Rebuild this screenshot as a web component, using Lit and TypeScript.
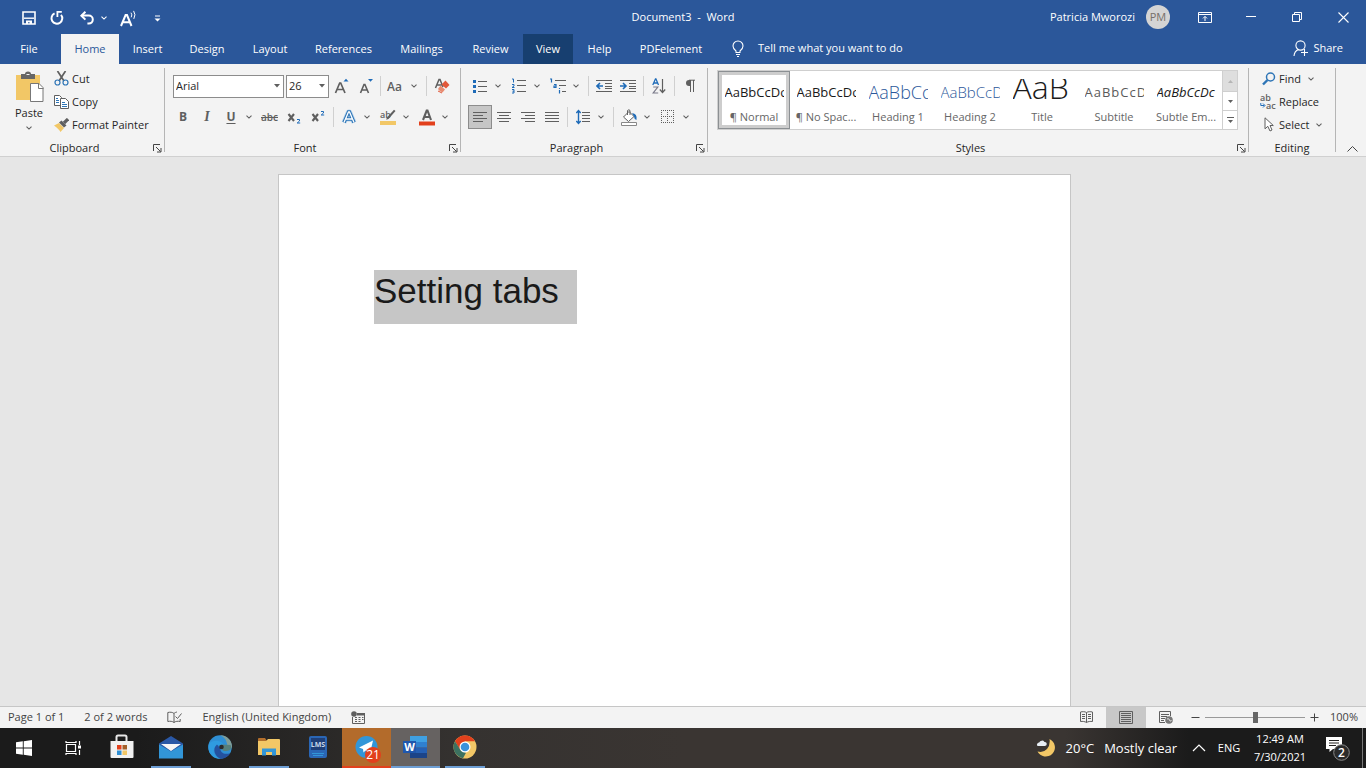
import { LitElement, html, svg, css, nothing } from "lit";
import { customElement, state } from "lit/decorators.js";
import { classMap } from "lit/directives/class-map.js";

const G = "#5f5f5f";
const B = "#1e6bb8";

const icon = (w: number, h: number, body: unknown) =>
  html`<svg class="icon" width=${w} height=${h} viewBox="0 0 ${w} ${h}" fill="none" aria-hidden="true">${body}</svg>`;

const chevron = (color = G) =>
  icon(6, 4, svg`<path d="M.5 .7 3 3.1 5.5 .7" stroke=${color} stroke-width="1.1"/>`);

const lines = (rows: number[][], color = G) =>
  svg`<path d=${rows.map(([x, y, w]) => `M${x} ${y}h${w}`).join("")} stroke=${color}/>`;

const launcherIcon = icon(9, 9, svg`<path d="M.5 7V.5H7M3 3l4.5 4.5M8 4v4H4" stroke="#444"/>`);

const saveIcon = icon(14, 14, svg`<path d="M1 1h12v12H1z" stroke="#fff" stroke-width="1.6"/><path d="M2 7.2h10" stroke="#fff" stroke-width="1.4"/><path d="M4 13V9.5h6V13H7.6v-1.8H6V13z" fill="#fff"/>`);
const repeatIcon = icon(16, 16, svg`<path d="M5.6 3.4A5.4 5.4 0 1 0 12 4.8" stroke="#fff" stroke-width="2"/><path d="M7.5 1.900h5.3M8.4 1.500v5.400" stroke="#fff" stroke-width="1.800"/>`);
const undoIcon = icon(16, 14, svg`<path d="M2.5 4.6h7.3a4 4 0 0 1 0 8H8.4" stroke="#fff" stroke-width="2"/><path d="M6.4 .8 2.4 4.7l4 3.9" stroke="#fff" stroke-width="2"/>`);
const readAloudIcon = icon(18, 18, svg`<path d="M1 17 5.600 6h1.400L11.500 17M3 13.300h6.500" stroke="#fff" stroke-width="2"/><path d="M11 3.700q1.600 2 .2 4.600M13.600 1.900q2.600 3.600.2 8" stroke="#fff"/>`);
const customiseIcon = icon(7, 7, svg`<path d="M1 1h5" stroke="#fff"/><path d="M.5 3.400h6L3.500 6.400z" fill="#fff"/>`);

const ribbonOptionsIcon = icon(14, 11, svg`<path d="M.5 .5h13v10H.5zM.5 2.500h13M7 9V4.600M5 6.400l2-2 2 2" stroke="#fff"/>`);
const minimiseIcon = icon(10, 10, svg`<path d="M0 4.500h10" stroke="#fff"/>`);
const restoreIcon = icon(10, 10, svg`<path d="M.5 2.500h7v7h-7zM2.500 2.500v-2h7v7h-2" stroke="#fff"/>`);
const closeIcon = icon(11, 11, svg`<path d="M.5 .5l10 10M10.500 .5l-10 10" stroke="#fff" stroke-width="1.100"/>`);
const bulbIcon = icon(12, 17, svg`<path d="M4 12.500V11C2 9.500 1 8 1 6a5 5 0 0 1 10 0c0 2-1 3.500-3 5v1.500zM4 14.500h4M5 16.500h2" stroke="#fff" stroke-width="1.100"/>`);
const shareIcon = icon(16, 17, svg`<circle cx="7.500" cy="5.500" r="4.600" stroke="#fff" stroke-width="1.100"/><path d="M1 16c.3-3.500 2-5.500 4.500-6.500M11.500 9v7M8 12.500h7" stroke="#fff" stroke-width="1.100"/>`);

const pasteIcon = icon(30, 32, svg`<path d="M2 4h24v25H2z" fill="#f2c766"/><path d="M7 3h4q0-2.500 3-2.500T17 3h4v5H7z" fill="#666"/><path d="M12.500 3.500h3" stroke="#f3f3f3"/><path d="M16.500 12.500h8.500l4 4v14H16.500z" fill="#fff" stroke="#777"/><path d="M24.500 12.500v5h5" stroke="#777"/>`);
const cutIcon = icon(15, 15, svg`<path d="M3.500 0 10 10M11.500 0 5 10" stroke=${G} stroke-width="1.700"/><circle cx="3.500" cy="11.500" r="2.500" stroke="#2e75b6" stroke-width="1.200"/><circle cx="11.500" cy="11.500" r="2.500" stroke="#2e75b6" stroke-width="1.200"/>`);
const copyIcon = icon(15, 14, svg`<path d="M.5 .5h5l2 2v8h-7z" fill="#fff" stroke=${G}/><path d="M6.500 3.500h5l3 3v7h-8z" fill="#fff" stroke=${G}/><path d="M2 3.500h2M2 5.500h3M2 7.500h3M8 7.500h3M8 9.500h5M8 11.500h5" stroke="#2e75b6"/>`);
const painterIcon = icon(15, 14, svg`<path d="M0 7.500 5 5l5 5-3.500 4q-1.500-3-6.500-6.500z" fill="#f2c766"/><path d="M5 4.500 7.500 2.500l5 5L10 9.500z" fill=${G}/><path d="M10 5 14 1" stroke=${G} stroke-width="3.200"/>`);

const growIcon = icon(16, 16, svg`<path d="M2.500 15 6.700 5h1L12 15M4 11.500h6.500" stroke=${G} stroke-width="1.700"/><path d="M10.500 3.500 13 .8l2.500 2.700z" fill=${B}/>`);
const shrinkIcon = icon(16, 16, svg`<path d="M3.500 15 7 6.500h.9L11.500 15M4.500 12H10" stroke=${G} stroke-width="1.600"/><path d="M11 1 13.500 3.800 16 1z" fill=${B}/>`);
const caseIcon = icon(18, 18, svg`<text x="0" y="14" class="glyph" font-size="12" font-weight="600" fill=${G}>Aa</text>`);
const clearIcon = icon(16, 16, svg`<path d="M1.500 10 5 1.500h1L9 9M3 7h4.500" stroke=${G} stroke-width="1.500"/><path d="M11.500 2.500 15.500 7 12 10.500 7.500 6.500z" fill="#e2583a"/><path d="M6.500 7.500 11 11.500 8.500 14.500Q6 14 4 11z" fill="#e88c72"/><path d="M4 13l4 2" stroke="#e2583a"/>`);
const strikeIcon = icon(20, 16, svg`<text x="1" y="12" class="glyph" font-size="10" font-weight="600" fill=${G}>abc</text><path d="M1 8.500h17" stroke=${G}/>`);
const subIcon = icon(14, 14, svg`<path d="M1.500 4 7 11M7 4 1.500 11" stroke=${G} stroke-width="2.100"/><path d="M10 9.500h2.500v1.500l-2.300 2h3" stroke=${B}/>`);
const supIcon = icon(14, 14, svg`<path d="M1.500 4 7 11M7 4 1.500 11" stroke=${G} stroke-width="2.100"/><path d="M10 1.500h2.500V3l-2.300 2h3" stroke=${B}/>`);
const effectsIcon = icon(16, 16, svg`<path d="M3 13.500 7.500 3h1L13 13.500M5 10h6" stroke="#b9d5ee" stroke-width="5" stroke-linejoin="round"/><path d="M3 13.500 7.500 3h1L13 13.500M5 10h6" stroke="#2e75b6" stroke-width="3.400"/><path d="M3 13.500 7.500 3h1L13 13.500M5 10h6" stroke="#fff" stroke-width="1.300"/>`);
const highlightIcon = icon(18, 17, svg`<text x="1" y="9" class="glyph" font-size="9" font-weight="600" fill=${G}>ab</text><path d="m16.500 2-7 8-2.300.8.700-2.300L15 .7z" fill=${G}/><path d="M1 12h16v4H1z" fill="#f2c766"/>`);
const colourIcon = icon(16, 17, svg`<path d="M4 11 7.700 1.500h.8L12 11M5.500 8h5.500" stroke=${G} stroke-width="2.100"/><path d="M0 12.500h16v4H0z" fill="#e2401c"/>`);

const bulletsIcon = icon(14, 15, svg`<path d="M0 1h3v3H0zM0 6h3v3H0zM0 11h3v3H0z" fill=${B}/>${lines([[5, 2.5, 9], [5, 7.5, 9], [5, 12.5, 9]])}`);
const numbersIcon = icon(15, 16, svg`<path d="M0 1h1.500v3.500M0 6.500h2V8L0 9.500h2.500M0 11.500h2v3.500H-.2M.5 13.200H2" stroke=${B}/>${lines([[5, 2.5, 9], [5, 7.5, 9], [5, 13.5, 9]])}`);
const multiIcon = icon(17, 16, svg`<path d="M0 1h1.500v3.500M4 6.500h2v3H4v-1.500h2M9.500 12v3.500M9.500 10v1" stroke=${B} stroke-width="1.200"/>${lines([[5, 2.5, 11], [9, 7.5, 7], [12, 13.500, 4]])}`);
const outdentIcon = icon(16, 14, svg`${lines([[0, 1.5, 16], [9, 4.5, 7], [9, 7.5, 7], [9, 9.500, 7], [0, 12.5, 16]])}<path d="M7 7H1.500M4 4 1 7l3 3" stroke=${B} stroke-width="1.600"/>`);
const indentIcon = icon(16, 14, svg`${lines([[0, 1.5, 16], [9, 4.5, 7], [9, 7.5, 7], [9, 9.500, 7], [0, 12.5, 16]])}<path d="M0 7h5.500M3 4l3 3-3 3" stroke=${B} stroke-width="1.600"/>`);
const sortIcon = icon(14, 16, svg`<path d="M.8 7 3.500.8h.4L6.500 7M1.800 5h4" stroke=${B} stroke-width="1.300"/><path d="M1.200 9h4.600l-4.600 6h5" stroke="#7a7a8a" stroke-width="1.200"/><path d="M10.500 1v13M7.800 11.500l2.700 3 2.700-3" stroke=${G} stroke-width="1.200"/>`);
const pilcrowIcon = icon(11, 14, svg`<path d="M5 1H4a3 3 0 0 0 0 6h1z" fill=${G}/><path d="M5.500 13V1M8.500 13V1M4 1.200h6" stroke=${G}/>`);

const leftIcon = icon(14, 11, lines([[0, .5, 14], [0, 3.5, 10], [0, 6.5, 14], [0, 9.5, 10]]));
const centreIcon = icon(14, 11, lines([[0, .5, 14], [2, 3.5, 10], [0, 6.5, 14], [2, 9.5, 10]]));
const rightIcon = icon(14, 11, lines([[0, .5, 14], [4, 3.5, 10], [0, 6.5, 14], [4, 9.5, 10]]));
const justifyIcon = icon(14, 11, lines([[0, .5, 14], [0, 3.5, 14], [0, 6.5, 14], [0, 9.5, 14]]));
const spacingIcon = icon(14, 16, svg`<path d="M2.500 1.500v13M.3 4 2.500 1.500 4.700 4M.3 12l2.200 2.500L4.700 12" stroke=${B} stroke-width="1.400"/>${lines([[6, 3.5, 8], [6, 6.5, 8], [6, 9.5, 8], [6, 12.5, 8]])}`);
const bucketIcon = icon(17, 17, svg`<path d="m8 2.500 5 5L7.500 12.500 2.500 8z" fill="#fff" stroke=${G}/><path d="M6.500 6V1.500q1.500-1.500 2.500 0V6" stroke=${G}/><path d="M11 4q5.500.5 4.500 7-2.500-1-2.500-3.500z" fill=${B}/><path d="M.5 13.500h15v3H.5z" fill="#fff" stroke="#888"/>`);
const bordersIcon = icon(14, 14, svg`<path d="M0 .5h14M0 6.500h14M0 12.500h14M.5 0v13M6.500 0v13M12.500 0v13" stroke=${G} stroke-dasharray="1 1"/>`);

const findIcon = icon(14, 14, svg`<circle cx="8.500" cy="5" r="4" stroke="#2e75b6" stroke-width="1.500"/><path d="M5.500 8 1 12.500" stroke="#2e75b6" stroke-width="2.400"/>`);
const replaceIcon = icon(17, 18, svg`<text x="0" y="8" class="glyph" font-size="9" font-weight="600" fill=${G}>ab</text><text x="6" y="16" class="glyph" font-size="9" font-weight="600" fill=${G}>ac</text><path d="M.8 10v2.500h3.500M3 10.500l2 2-2 2" stroke=${B}/>`);
const selectIcon = icon(10, 15, svg`<path d="M1 .8v11l2.800-2.500L6 14l2-1-2-4.500h3.300z" fill="#fff" stroke=${G}/>`);

const proofIcon = icon(15, 13, svg`<path d="M7 11.500V2.500C5.500 1 3 1 .8 1.500v9c2.200-.5 4.700-.3 6.200 1zM7 2.500C8 1.500 9 1.200 10 1M7 11.500c1.500-1.300 4-1.500 6.200-1V8M8.500 5.500l2 2 4-5" stroke=${G}/>`);
const macroIcon = icon(14, 13, svg`<path d="M1.500 6v6.500h12v-10H8" stroke=${G}/><path d="M6 2h8v2.500H6z" fill=${G}/><circle cx="3" cy="3" r="2.800" fill=${G}/><path d="M4 6.500h2M7.500 6.500h2M11 6.500h1.500M4 8.500h2M7.500 8.500h2M11 8.500h1.500M4 10.500h2M7.500 10.500h2" stroke=${G}/>`);
const readIcon = icon(13, 12, svg`<path d="M6.500 11.500V1.500C5 .5 2.500.5.5 1v9.500c2-.3 4.500 0 6 1zM6.500 1.500C8 .5 10.500.5 12.500 1v9.500c-2-.3-4.500 0-6 1" stroke=${G}/><path d="M2 3.500h3M2 5.500h3M2 7.500h3M8 3.500h3M8 5.500h3M8 7.500h3" stroke=${G}/>`);
const printIcon = icon(14, 13, svg`<path d="M.5 .5h13v12H.5z" stroke=${G}/>${lines([[2, 2.5, 10], [2, 4.500, 10], [2, 6.500, 10], [2, 8.500, 10], [2, 10.500, 10]])}`);
const webIcon = icon(15, 13, svg`<path d="M6 11.500H.5V.5h11V5" stroke=${G}/>${lines([[2, 3.5, 8], [2, 5.5, 6], [2, 7.500, 4], [2, 9.500, 3]])}<circle cx="10" cy="9" r="3.800" fill="#777"/><path d="M8 8q2-1 2.500 1t2 .5" stroke="#e8e8e8"/>`);

const windowsIcon = icon(16, 16, svg`<path d="M0 2.300 6.800 1.300v6.300H0zM7.700 1.200 16 0v7.600H7.700zM0 8.400h6.800v6.300L0 13.700zM7.700 8.400H16V16l-8.300-1.200z" fill="#fff"/>`);
const taskViewIcon = icon(16, 16, svg`<path d="M1.500 4.500h9v7h-9zM1 1v1.500h10V1M1 15v-1.500h10V15M14.500 1v4M14.500 10v5" stroke="#fff" stroke-width="1.200"/><path d="M13 5.500h3v3h-3z" fill="#fff"/>`);
const storeIcon = icon(24, 26, svg`<path d="M6.500 9V3q0-1.500 1.500-1.500h7q1.500 0 1.500 1.500v6" stroke="#e8e8e8" stroke-width="2"/><path d="M.5 7h23v16q0 1-1 1h-21q-1 0-1-1z" fill="#f1f1f1"/><path d="M7 11h4.500v4.500H7z" fill="#e2401c"/><path d="M12.500 11H17v4.500h-4.500z" fill="#a35f28"/><path d="M7 16.500h4.500V21H7z" fill="#2f8fd4"/><path d="M12.500 16.500H17V21h-4.500z" fill="#f2c766"/>`);
const mailIcon = icon(24, 24, svg`<path d="M0 8.500 12 1l12 7.500V23H0z" fill="#2a58a6"/><path d="M2 9h20L12 16z" fill="#f6f6f6"/><path d="M0 9.500 12 16.500 24 9.500V23.500H0z" fill="#3296d8"/><path d="M3 9h18l-9 6.500z" fill="#f6f6f6"/>`);
const edgeIcon = icon(24, 24, svg`<circle cx="12" cy="12" r="11.800" fill="#2f8fd4"/><path d="M24 11.500C24 5 18.500 .3 12.200.3q6 2.500 7 9.200-.5 4 .3 5.500 4-.5 4.500-3.500z" fill="#7f9d98"/><path d="M1 9C4 5 12 4.500 15 9c1 2-.5 4-.5 4-1-3-6-4-8 0s0 8.500 6 10.800C5 24.500-1.500 17 1 9z" fill="#2f9be0"/><path d="M9 9.500c-5 4-2.500 12 3.800 14.300 5-.3 8-3 9.500-5.800-6 2.500-10.500-1-9.800-4.500z" fill="#24519f"/><path d="M13 9.500c3 1 2 4 1 4.500 0 2 4 3 8 1 2-2 1-4 .5-5z" fill="#56807c"/><circle cx="13.500" cy="12" r="2.300" fill="#2b2a2a"/>`);
const folderIcon = icon(22, 20, svg`<path d="M0 2q0-1 1-1h6l2 3H0z" fill="#b36f2c"/><path d="M0 4h8l2-2h11q1 0 1 1v15H0z" fill="#f2c766"/><path d="M4 18.500V11.500h14v7h-4V15H8v3.500z" fill="#3296d8"/>`);
const lmsIcon = icon(20, 24, svg`<rect x="1" y="1" width="18" height="22" rx="2" fill="#2a66b5"/><path d="M3 3h14v12H3z" fill="#1f3f78"/><text x="10" y="12" class="glyph" font-size="7" font-weight="700" text-anchor="middle" fill="#c9d8ea">LMS</text><path d="M4 18.500h12M5 20.500h10" stroke="#3296d8"/>`);
const telegramIcon = icon(24, 24, svg`<circle cx="11.500" cy="12" r="11" fill="#3296d8"/><path d="m4 12.500 14-7-3 13-4.500-3-2 2-.5-3.500z" fill="#fff"/>`);
const wordIcon = icon(25, 24, svg`<path d="M7 1h17v6H7z" fill="#3fa0e2"/><path d="M7 7h17v5.500H7z" fill="#2f80cf"/><path d="M7 12.500h17V18H7z" fill="#2560b4"/><path d="M7 18h17v5H7z" fill="#1c4488"/><path d="M0 6h13v12H0z" fill="#1f57ad"/><text x="6.500" y="16" class="glyph" font-size="11" font-weight="700" text-anchor="middle" fill="#fff">W</text>`);
const chromeIcon = icon(24, 24, svg`<circle cx="12" cy="12" r="11.500" fill="#f2c766"/><path d="M12 .5A11.500 11.500 0 0 1 22 6.300H12L7 14.800 2 6.300A11.500 11.500 0 0 1 12 .5z" fill="#e2401c"/><path d="M2 6.200 7.500 15l4.500 2.500 1 .3-3 5.500A11.500 11.500 0 0 1 2 6.200z" fill="#3c7160"/><circle cx="12" cy="12" r="5.500" fill="#fff"/><circle cx="12" cy="12" r="4.300" fill="#3a92da"/>`);
const moonIcon = icon(20, 20, svg`<path d="M13.500 1a9.200 9.200 0 1 1-12 12.500q6 1.500 9.500-2.500t2.500-10z" fill="#f2c766"/><path d="M1 7.500a2.400 2.400 0 0 1 2.200-3A3 3 0 0 1 8.500 4 2 2 0 0 1 9 8H2z" fill="#e8eef4"/>`);
const noticeIcon = icon(24, 26, svg`<path d="M0 2h16v12H7l-3.500 3V14H0z" fill="#fff"/><path d="M3 5.500h10M3 8h10M3 10.500h7" stroke="#222"/><circle cx="15.500" cy="17.500" r="7.800" fill="#2b2b2b" stroke="#8a8a8a"/><text x="15.500" y="22" class="glyph" font-size="12" font-weight="600" text-anchor="middle" fill="#fff">2</text>`);

interface Tool { label: string; icon: unknown; menu?: boolean; letter?: string; on?: boolean; }
type Item = Tool | "sep";

const fontTop: Item[] = [
  { label: "Increase font size", icon: growIcon },
  { label: "Decrease font size", icon: shrinkIcon },
  "sep",
  { label: "Change case", icon: caseIcon, menu: true },
  "sep",
  { label: "Clear formatting", icon: clearIcon },
];
const fontBottom: Item[] = [
  { label: "Bold", icon: "B", letter: "bold" },
  { label: "Italic", icon: "I", letter: "italic" },
  { label: "Underline", icon: "U", letter: "underline", menu: true },
  { label: "Strikethrough", icon: strikeIcon },
  { label: "Subscript", icon: subIcon },
  { label: "Superscript", icon: supIcon },
  "sep",
  { label: "Text effects", icon: effectsIcon, menu: true },
  { label: "Text highlight colour", icon: highlightIcon, menu: true },
  { label: "Font colour", icon: colourIcon, menu: true },
];
const paraTop: Item[] = [
  { label: "Bullets", icon: bulletsIcon, menu: true },
  { label: "Numbering", icon: numbersIcon, menu: true },
  { label: "Multilevel list", icon: multiIcon, menu: true },
  "sep",
  { label: "Decrease indent", icon: outdentIcon },
  { label: "Increase indent", icon: indentIcon },
  "sep",
  { label: "Sort", icon: sortIcon },
  "sep",
  { label: "Show paragraph marks", icon: pilcrowIcon },
];
const paraBottom: Item[] = [
  { label: "Align left", icon: leftIcon, on: true },
  { label: "Centre", icon: centreIcon },
  { label: "Align right", icon: rightIcon },
  { label: "Justify", icon: justifyIcon },
  "sep",
  { label: "Line spacing", icon: spacingIcon, menu: true },
  "sep",
  { label: "Shading", icon: bucketIcon, menu: true },
  { label: "Borders", icon: bordersIcon, menu: true },
];

const tabs = ["File", "Home", "Insert", "Design", "Layout", "References", "Mailings", "Review", "View", "Help", "PDFelement"];

const styleItems = [
  { name: "¶ Normal", sample: "AaBbCcDc", kind: "body" },
  { name: "¶ No Spac...", sample: "AaBbCcDc", kind: "body" },
  { name: "Heading 1", sample: "AaBbCc", kind: "h1" },
  { name: "Heading 2", sample: "AaBbCcD", kind: "h2" },
  { name: "Title", sample: "AaB", kind: "big" },
  { name: "Subtitle", sample: "AaBbCcD", kind: "subtitle" },
  { name: "Subtle Em...", sample: "AaBbCcDc", kind: "emphasis" },
];

const apps = [
  { label: "Microsoft Store", icon: storeIcon, run: "" },
  { label: "Mail", icon: mailIcon, run: "running" },
  { label: "Microsoft Edge", icon: edgeIcon, run: "" },
  { label: "File Explorer", icon: folderIcon, run: "running" },
  { label: "LMS", icon: lmsIcon, run: "" },
  { label: "Telegram", icon: telegramIcon, run: "alert", badge: "21" },
  { label: "Word", icon: wordIcon, run: "current" },
  { label: "Chrome", icon: chromeIcon, run: "running" },
];

@customElement("app-root")
export class AppRoot extends LitElement {
  @state() private tab = "Home";
  @state() private picked = 0;

  static styles = css`
    :host {
      display: flex;
      flex-direction: column;
      height: 100vh;
      overflow: hidden;
      font: 11px/16px "Open Sans", "Noto Sans", sans-serif;
      color: #262626;
      background: #e6e6e6;
    }
    * { box-sizing: border-box; }
    button {
      display: flex;
      align-items: center;
      justify-content: center;
      margin: 0;
      padding: 0;
      border: 0;
      background: none;
      font: inherit;
      color: inherit;
      white-space: nowrap;
    }
    .icon { display: block; flex: none; }
    .glyph { font-family: "Open Sans", "Noto Sans", sans-serif; }

    .titlebar {
      display: grid;
      grid-template-columns: 1fr auto 1fr;
      height: 32px;
      background: #2b579a;
      color: #fff;
    }
    .quick { display: flex; padding: 2px 0 0 15px; }
    .quick button { width: 28px; }
    .quick .undo { width: 44px; gap: 6px; }
    .title { margin: 0; font: inherit; line-height: 34px; white-space: pre; }
    .window { display: flex; justify-content: flex-end; align-items: center; }
    .window button { width: 46px; height: 30px; }
    .avatar {
      width: 24px;
      height: 24px;
      margin: 0 12px 0 11px;
      border-radius: 50%;
      background: #d4d4d4;
      color: #77706a;
      line-height: 24px;
      text-align: center;
    }

    .tabs { display: flex; height: 32px; background: #2b579a; color: #fff; }
    .tablist {
      display: grid;
      grid-template-columns: 61px 58px 57px 62px 64px 83px 73px 65px 50px 53px 90px;
      padding-top: 2px;
    }
    .tab:first-child { margin-right: 3px; }
    .tab.shaded { background: #173f70; }
    .tab.active { background: #f3f3f3; color: #2b579a; }
    .tell { gap: 14px; padding-left: 16px; }
    .share { gap: 4px; margin-left: auto; padding-right: 23px; }

    .ribbon {
      display: flex;
      height: 93px;
      background: #f3f3f3;
      border-bottom: 1px solid #d0d0d0;
    }
    .divider { width: 1px; margin: 4px 0; background: #b5b5b5; flex: none; }
    .group { display: flex; flex-direction: column; flex: none; }
    .group-body { flex: 1; min-height: 0; }
    .group-foot { display: grid; grid-template-columns: 1fr 15px; height: 16px; }
    .group-foot h2 { margin: 0; font: inherit; text-align: center; }
    .group-foot.plain { grid-template-columns: 1fr; }
    .launcher { padding-left: 1px; }
    .clipboard { width: 164px; }
    .font { width: 295px; }
    .paragraph { width: 246px; }
    .styles { flex: 1; }
    .editing { width: 86px; }

    .split { display: flex; padding-top: 3px; }
    .paste { flex-direction: column; justify-content: flex-start; width: 50px; margin-left: 4px; padding-top: 4px; }
    .paste span { line-height: 20px; }
    .paste .icon:last-child { margin-top: 3px; }
    .actions { display: flex; flex-direction: column; }
    .actions button { height: 23px; justify-content: flex-start; gap: 3px; }
    .actions .slot { display: flex; justify-content: center; width: 15px; }
    .actions .more { margin-left: 4px; }
    .editing .actions, .editing .group-body { padding: 3px 0 0 12px; }

    .tools { display: flex; flex-direction: column; gap: 7px; padding-top: 10px; }
    .row { display: flex; height: 24px; align-items: center; }
    .font .row { padding-left: 6px; }
    .paragraph .row { padding-left: 7px; }
    .tool { width: 24px; height: 24px; color: #5f5f5f; font-size: 12px; }
    .tool.on { background: #c6c6c6; border: 1px solid #8c8c8c; }
    .bold { font-weight: 700; }
    .italic { font-family: "Liberation Serif", serif; font-size: 14px; font-style: italic; font-weight: 700; }
    .underline { font-weight: 700; text-decoration: underline; text-underline-offset: 2px; }
    .menu { width: 15px; height: 24px; justify-content: flex-start; padding-left: 3px; }
    .bar { width: 1px; height: 20px; margin: 0 3px; background: #d0d0d0; }
    .combo { display: grid; height: 23px; margin: 0 0 0 2px; }
    .combo select, .combo .icon { grid-area: 1 / 1; }
    .combo select {
      appearance: none;
      margin: 0;
      padding: 0 0 0 2px;
      border: 1px solid #8c8c8c;
      border-radius: 0;
      background: #fff;
      font: inherit;
      color: #262626;
    }
    .combo .icon { align-self: center; justify-self: end; margin-right: 4px; pointer-events: none; }
    .family { width: 111px; }
    .size { width: 43px; }

    .gallery { display: flex; width: 521px; height: 60px; margin: 6px 0 0 9px; border: 1px solid #cfcfcf; background: #fff; }
    .style { flex-direction: column; justify-content: flex-start; width: 72px; padding-top: 8px; color: #666; line-height: 18px; }
    .style.picked { box-shadow: inset 0 0 0 1px #8c9093, inset 0 0 0 4px #cdcdcd; }
    .sample {
      width: 59px;
      height: 29px;
      overflow: hidden;
      text-align: left;
      font-size: 13px;
      line-height: 26px;
      color: #1a1a1a;
    }
    .sample.h1 { font-size: 18px; font-weight: 300; color: #2b579a; }
    .sample.h2 { font-size: 15px; font-weight: 300; color: #2b579a; }
    .sample.big { font-size: 32px; font-weight: 300; line-height: 16px; }
    .sample.subtitle { color: #5a5a5a; letter-spacing: 1px; }
    .sample.emphasis { font-style: italic; }
    .scroll { display: grid; grid-template-rows: 20px 19px 19px; width: 15px; }
    .scroll button { border-left: 1px solid #cfcfcf; }
    .scroll button + button { border-top: 1px solid #cfcfcf; }
    .scroll button:disabled { background: #dedede; }
    .collapse { align-self: flex-end; width: 30px; height: 15px; padding-left: 3px; }

    .canvas { flex: 1; min-height: 0; padding: 17px 17px 0 0; overflow: hidden; background: #e6e6e6; }
    .page {
      width: 793px;
      min-height: 1122px;
      margin: 0 auto;
      padding: 95px;
      border: 1px solid #c6c6c6;
      background: #fff;
    }
    .page p { display: flex; margin: 0; }
    .selected {
      padding: 0 18px 13px 0;
      background: #c6c6c6;
      font: 35px/41px "Liberation Sans", Arial, sans-serif;
      color: #1a1a1a;
    }

    .status { display: flex; height: 22px; background: #f3f3f3; border-top: 1px solid #c6c6c6; color: #444; line-height: 20px; }
    .facts { display: flex; align-items: center; height: 20px; gap: 20px; padding-left: 8px; }
    .views { display: flex; align-items: center; height: 20px; margin-left: auto; padding-right: 8px; }
    .view { width: 40px; height: 20px; }
    .view.on { background: #c8c8c8; box-shadow: 0 1px #c8c8c8; }
    .zoom-step { width: 19px; height: 20px; }
    .slider { appearance: none; width: 100px; height: 12px; margin: 0; background: linear-gradient(#999, #999) center / 100% 1px no-repeat; }
    .slider::-webkit-slider-thumb { appearance: none; width: 5px; height: 11px; background: #666; }
    .percent { width: 34px; text-align: right; }

    .taskbar {
      display: flex;
      height: 40px;
      color: #fff;
      background: linear-gradient(90deg, #1b1b1b 10%, #353230 34%, #3a3532 50%, #3a3532 78%, #1b1b1b 87%);
    }
    .task { position: relative; width: 49px; border-bottom: 2px solid transparent; }
    .start { width: 48px; }
    .task-view { width: 49px; }
    .running::after { content: ""; position: absolute; left: 5px; right: 4px; bottom: -2px; height: 2px; background: #6d9ed4; }
    .alert { background: #b36b2b; border-color: #e2401c; }
    .current { background: #666261; border-color: #6d9ed4; }
    .badge {
      position: absolute;
      right: 10px;
      bottom: 3px;
      width: 16px;
      height: 16px;
      border-radius: 8px;
      background: #e2401c;
      font-size: 12px;
      text-align: center;
    }
    .tray { display: flex; margin-left: auto; }
    .weather { gap: 10px; font-size: 13px; margin-right: 15px; }
    .lang { width: 34px; margin-left: 6px; }
    .clock { flex-direction: column; width: 68px; line-height: 18px; }
    .notices { width: 48px; }
    .desktop { width: 4px; border-left: 1px solid #777; }
  `;

  private tools(items: Item[]) {
    return items.map((t) =>
      t === "sep"
        ? html`<span class="bar"></span>`
        : html`<button class=${classMap({ tool: true, on: !!t.on, ...(t.letter ? { [t.letter]: true } : {}) })} aria-label=${t.label}>${t.icon}</button>
            ${t.menu ? html`<button class="menu" aria-label="${t.label} options">${chevron()}</button>` : nothing}`
    );
  }

  private foot(name: string, launcher = true) {
    return html`<div class=${classMap({ "group-foot": true, plain: !launcher })}>
      <h2>${name}</h2>
      ${launcher ? html`<button class="launcher" aria-label="${name} settings">${launcherIcon}</button>` : nothing}
    </div>`;
  }

  private action(glyph: unknown, name: string, menu = false) {
    return html`<button><span class="slot">${glyph}</span>${name}${menu ? html`<span class="more">${chevron()}</span>` : nothing}</button>`;
  }

  private combo(cls: string, label: string, values: string[]) {
    return html`<label class="combo ${cls}">
      <select aria-label=${label}>${values.map((v) => html`<option>${v}</option>`)}</select>
      ${icon(6, 4, svg`<path d="M0 0h6L3 3.500z" fill=${G}/>`)}
    </label>`;
  }

  render() {
    return html`
      <header class="titlebar">
        <div class="quick">
          <button aria-label="Save">${saveIcon}</button>
          <button aria-label="Repeat">${repeatIcon}</button>
          <button class="undo" aria-label="Undo">${undoIcon}${chevron("#fff")}</button>
          <button aria-label="Read aloud">${readAloudIcon}</button>
          <button aria-label="Customise toolbar">${customiseIcon}</button>
        </div>
        <h1 class="title">Document3  -  Word</h1>
        <div class="window">
          <span>Patricia Mworozi</span>
          <span class="avatar">PM</span>
          <button aria-label="Ribbon display options">${ribbonOptionsIcon}</button>
          <button aria-label="Minimise">${minimiseIcon}</button>
          <button aria-label="Restore">${restoreIcon}</button>
          <button aria-label="Close">${closeIcon}</button>
        </div>
      </header>

      <nav class="tabs">
        <div class="tablist">
          ${tabs.map((t) => html`<button class=${classMap({ tab: true, active: t === this.tab, shaded: t === "View" })} @click=${() => (this.tab = t)}>${t}</button>`)}
        </div>
        <button class="tell">${bulbIcon}Tell me what you want to do</button>
        <button class="share">${shareIcon}Share</button>
      </nav>

      <section class="ribbon">
        <div class="group clipboard">
          <div class="group-body split">
            <button class="paste">${pasteIcon}<span>Paste</span>${chevron()}</button>
            <div class="actions">
              ${this.action(cutIcon, "Cut")} ${this.action(copyIcon, "Copy")} ${this.action(painterIcon, "Format Painter")}
            </div>
          </div>
          ${this.foot("Clipboard")}
        </div>
        <div class="divider"></div>
        <div class="group font">
          <div class="group-body tools">
            <div class="row">
              ${this.combo("family", "Font", ["Arial", "Calibri", "Times New Roman"])}
              ${this.combo("size", "Font size", ["26", "28", "36"])}
              ${this.tools(fontTop)}
            </div>
            <div class="row">${this.tools(fontBottom)}</div>
          </div>
          ${this.foot("Font")}
        </div>
        <div class="divider"></div>
        <div class="group paragraph">
          <div class="group-body tools">
            <div class="row">${this.tools(paraTop)}</div>
            <div class="row">${this.tools(paraBottom)}</div>
          </div>
          ${this.foot("Paragraph")}
        </div>
        <div class="divider"></div>
        <div class="group styles">
          <div class="group-body">
            <div class="gallery">
              ${styleItems.map(
                (s, i) => html`<button class=${classMap({ style: true, picked: i === this.picked })} @click=${() => (this.picked = i)}>
                  <span class="sample ${s.kind}">${s.sample}</span><span>${s.name}</span>
                </button>`
              )}
              <div class="scroll">
                <button disabled aria-label="Previous styles">${icon(5, 3, svg`<path d="M0 3h5L2.500 0z" fill="#b5b5b5"/>`)}</button>
                <button aria-label="Next styles">${icon(5, 3, svg`<path d="M0 0h5L2.500 3z" fill=${G}/>`)}</button>
                <button aria-label="All styles">${icon(7, 6, svg`<path d="M0 .5h7" stroke=${G}/><path d="M1 3h5L3.500 6z" fill=${G}/>`)}</button>
              </div>
            </div>
          </div>
          ${this.foot("Styles")}
        </div>
        <div class="divider"></div>
        <div class="group editing">
          <div class="group-body actions">
            ${this.action(findIcon, "Find", true)} ${this.action(replaceIcon, "Replace")} ${this.action(selectIcon, "Select", true)}
          </div>
          ${this.foot("Editing", false)}
        </div>
        <div class="divider"></div>
        <button class="collapse" aria-label="Collapse ribbon">${icon(11, 6, svg`<path d="M.5 5.500l5-5 5 5" stroke="#444"/>`)}</button>
      </section>

      <main class="canvas">
        <article class="page"><p><span class="selected">Setting tabs</span></p></article>
      </main>

      <footer class="status">
        <div class="facts">
          <span>Page 1 of 1</span><span>2 of 2 words</span>${proofIcon}<span>English (United Kingdom)</span>${macroIcon}
        </div>
        <div class="views">
          <button class="view" aria-label="Read mode">${readIcon}</button>
          <button class="view on" aria-label="Print layout">${printIcon}</button>
          <button class="view" aria-label="Web layout">${webIcon}</button>
          <button class="zoom-step" aria-label="Zoom out">${icon(9, 9, svg`<path d="M.5 4.500h8" stroke="#444"/>`)}</button>
          <input class="slider" type="range" min="10" max="190" value="100" aria-label="Zoom" />
          <button class="zoom-step" aria-label="Zoom in">${icon(9, 9, svg`<path d="M.5 4.500h8M4.500 .5v8" stroke="#444"/>`)}</button>
          <span class="percent">100%</span>
        </div>
      </footer>

      <nav class="taskbar">
        <button class="start" aria-label="Start">${windowsIcon}</button>
        <button class="task-view" aria-label="Task view">${taskViewIcon}</button>
        ${apps.map((a) => html`<button class="task ${a.run}" aria-label=${a.label}>${a.icon}${a.badge ? html`<span class="badge">${a.badge}</span>` : nothing}</button>`)}
        <div class="tray">
          <button class="weather">${moonIcon}<span>20°C</span><span>Mostly clear</span></button>
          <button aria-label="Hidden icons">${icon(14, 8, svg`<path d="M1 7l6-6 6 6" stroke="#fff" stroke-width="1.200"/>`)}</button>
          <button class="lang">ENG</button>
          <button class="clock"><span>12:49 AM</span><span>7/30/2021</span></button>
          <button class="notices" aria-label="Notifications">${noticeIcon}</button>
          <button class="desktop" aria-label="Show desktop"></button>
        </div>
      </nav>
    `;
  }
}
